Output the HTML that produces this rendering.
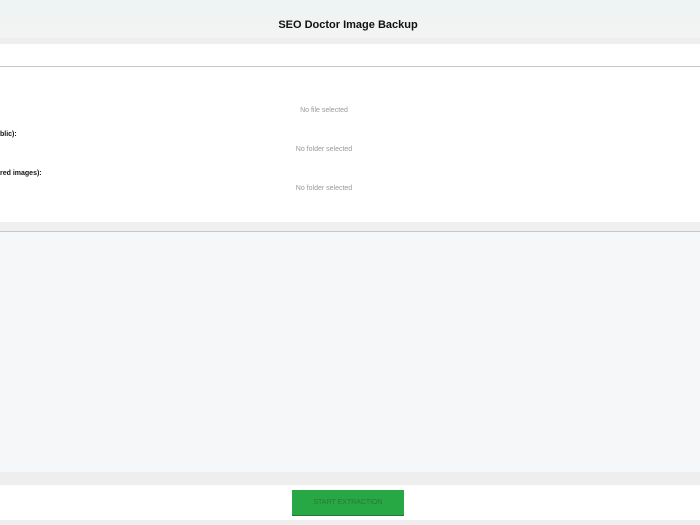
<html><head><style>
body{margin:0;width:700px;height:525px;overflow:hidden;font-family:"Liberation Sans",sans-serif;background:#fff;position:relative}
div{position:absolute;left:0;width:700px}
.t{font-size:7px;color:#999;text-align:center;width:648px}
.l{font-size:7px;font-weight:bold;color:#111}
</style></head><body>
<div style="top:0;height:38px;background:linear-gradient(#eef3f3,#f3f3f3)"></div>
<div style="top:19px;left:-2px;text-align:center;font-size:11px;font-weight:bold;color:#111">SEO Doctor Image Backup</div>
<div style="top:38px;height:6px;background:#eeeeee"></div>
<div style="top:66px;height:1px;background:#c8c8c8"></div>
<div class="t" style="top:107px">No file selected</div>
<div class="l" style="top:131px">blic):</div>
<div class="t" style="top:146px">No folder selected</div>
<div class="l" style="top:170px">red images):</div>
<div class="t" style="top:185px">No folder selected</div>
<div style="top:222px;height:9px;background:#efefef"></div>
<div style="top:231px;height:1px;background:#c8c8c8"></div>
<div style="top:232px;height:240px;background:#f6f7f8"></div>
<div style="top:472px;height:13px;background:#eeeeee"></div>
<div style="top:490px;left:292px;width:112px;height:26px;background:#28a745;border-bottom:1px solid #1e7a34;box-sizing:border-box;text-align:center;line-height:26px;font-size:7px;color:#2a7a3a">START EXTRACTION</div>
<div style="top:520px;height:5px;background:#eeeeee"></div>
</body></html>
